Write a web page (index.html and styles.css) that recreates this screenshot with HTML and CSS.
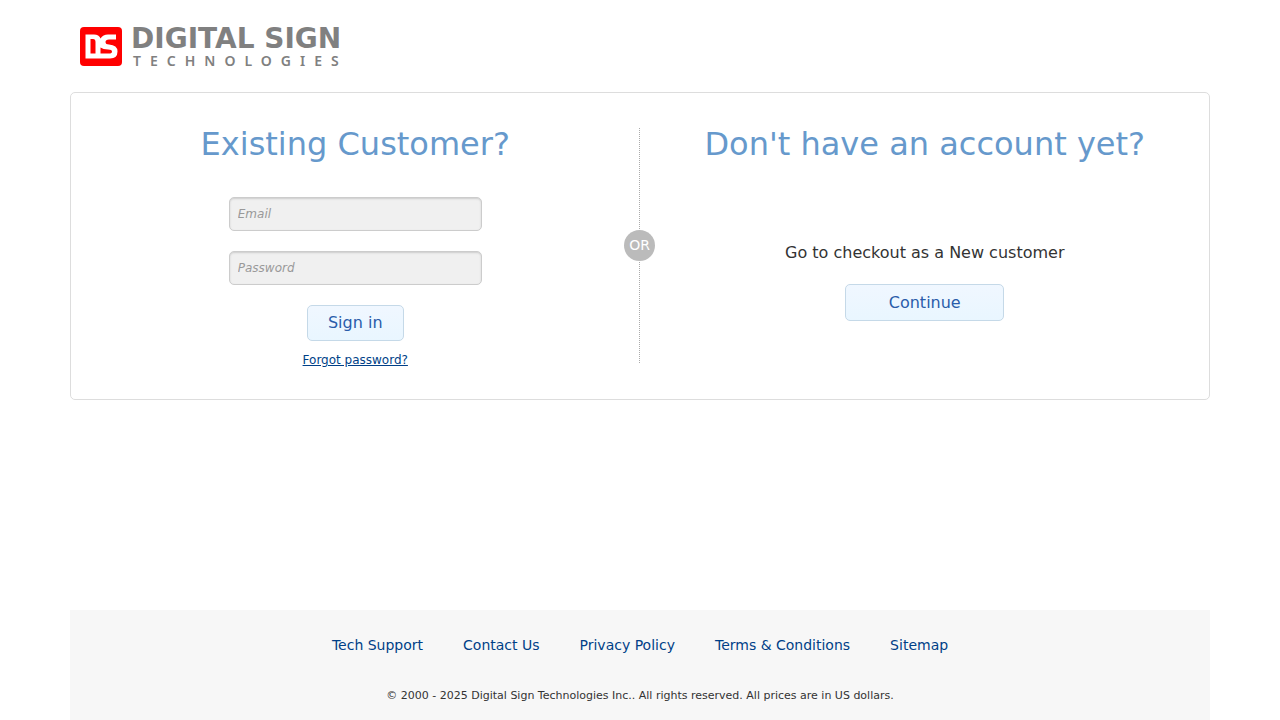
FILE: index.html
```html
<!DOCTYPE html>
<html lang="en">
<head>
<meta charset="utf-8">
<meta name="viewport" content="width=device-width, initial-scale=1">
<title>Sign in - Digital Sign Technologies</title>
<link rel="stylesheet" href="styles.css">
</head>
<body>
<div class="page">
  <header class="header">
    <a class="logo" href="#">
      <svg class="logo-mark" viewBox="0 0 42 39" aria-hidden="true">
        <rect width="42" height="39" rx="4" fill="#f00"/>
        <path d="M5.500 7.500H14Q19 7.500 20.500 11.500Q23 7.500 28 7.500H36V12.500H29Q25.500 12.500 25.500 15Q25.500 17.500 29 17.500Q37.500 18 37.500 24.500Q37.500 31.500 30 31.500H5.500ZM10.500 12V26.500H15.500V15Q15.500 12 13 12ZM20.500 20.500V26.500H29Q32 26.500 32 24.500Q32 22.500 28 22.500Q23 22.500 20.500 20.500Z" fill="#fff" fill-rule="evenodd"/>
      </svg>
      <span class="logo-text">
        <span class="logo-name">DIGITAL SIGN</span>
        <span class="logo-sub">TECHNOLOGIES</span>
      </span>
    </a>
  </header>

  <main class="panel">
    <section class="column">
      <h1 class="title">Existing Customer?</h1>
      <form class="login">
        <input class="field" type="email" placeholder="Email" aria-label="Email">
        <input class="field" type="password" placeholder="Password" aria-label="Password">
        <button class="button" type="submit">Sign in</button>
        <a class="forgot" href="#">Forgot password?</a>
      </form>
    </section>
    <div class="divider"><span class="or">OR</span></div>
    <section class="column">
      <h2 class="title">Don't have an account yet?</h2>
      <p class="note">Go to checkout as a New customer</p>
      <button class="button button-wide" type="button">Continue</button>
    </section>
  </main>

  <footer class="footer">
    <nav class="links">
      <a href="#">Tech Support</a>
      <a href="#">Contact Us</a>
      <a href="#">Privacy Policy</a>
      <a href="#">Terms &amp; Conditions</a>
      <a href="#">Sitemap</a>
    </nav>
    <p class="copyright">© 2000 - 2025 Digital Sign Technologies Inc.. All rights reserved. All prices are in US dollars.</p>
  </footer>
</div>
</body>
</html>
```

FILE: styles.css
```css
* {
  box-sizing: border-box;
}

body {
  margin: 0;
  background: #fff;
  color: #333;
  font-family: "DejaVu Sans", sans-serif;
  font-size: 16px;
}

.page {
  display: flex;
  flex-direction: column;
  max-width: 1140px;
  min-height: 100vh;
  margin: 0 auto;
}

.header {
  padding: 24px 10px;
}

.logo {
  display: inline-flex;
  align-items: center;
  gap: 8px;
  height: 44px;
  color: #808080;
  text-decoration: none;
  vertical-align: top;
}

.logo-mark {
  width: 42px;
  height: 39px;
}

.logo-text {
  display: flex;
  flex-direction: column;
  padding: 2px 0 0 1px;
}

.logo-name {
  font-size: 28px;
  font-weight: 700;
  line-height: 28px;
}

.logo-sub {
  padding-left: 2px;
  font-family: "Noto Sans", sans-serif;
  font-size: 14px;
  font-weight: 600;
  letter-spacing: 9px;
  line-height: 16px;
}

.panel {
  display: flex;
  padding: 35px 0 32px;
  border: 1px solid #ddd;
  border-radius: 5px;
}

.column {
  display: flex;
  flex: 1;
  flex-direction: column;
  align-items: center;
}

.title {
  margin: 0;
  color: #69c;
  font-size: 32px;
  font-weight: 400;
  line-height: 32px;
}

.login {
  display: flex;
  flex-direction: column;
  align-items: center;
  margin-top: 37px;
}

.field {
  width: 253px;
  height: 34px;
  margin: 0 0 20px;
  padding: 0 8px;
  border: 1px solid #ccc;
  border-radius: 5px;
  background: #f0f0f0;
  box-shadow: inset 0 1px 2px #ccc;
  font-family: inherit;
  font-size: 12px;
}

.field::placeholder {
  color: #999;
  font-style: italic;
}

.button {
  height: 36px;
  padding: 0 20px 1px;
  border: 1px solid #c5d9e8;
  border-radius: 5px;
  background: linear-gradient(#f0f7ff, #e9f6ff);
  color: #2a5caa;
  font-family: inherit;
  font-size: 16px;
}

.button-wide {
  width: 159px;
  height: 37px;
}

.forgot {
  margin-top: 12px;
  color: #003f87;
  font-size: 12px;
  line-height: 14px;
}

.divider {
  display: flex;
  align-items: center;
  justify-content: center;
  width: 1px;
  margin: 0 1px 4px -1px;
  border-left: 1px dotted #aaa;
}

.or {
  flex: none;
  width: 31px;
  height: 31px;
  border-radius: 50%;
  background: #bbb;
  color: #fff;
  font-size: 14px;
  line-height: 31px;
  text-align: center;
}

.note {
  margin: 82px 0 20px;
  line-height: 22px;
}

.footer {
  margin-top: auto;
  padding: 25px 0 16px;
  background: #f7f7f7;
  text-align: center;
}

.links {
  display: flex;
  flex-wrap: wrap;
  justify-content: center;
  gap: 0 40px;
  font-size: 14px;
  line-height: 20px;
}

.links a {
  color: #003f87;
  text-decoration: none;
}

.copyright {
  margin: 32px 0 0;
  font-size: 11px;
  line-height: 17px;
}
```
